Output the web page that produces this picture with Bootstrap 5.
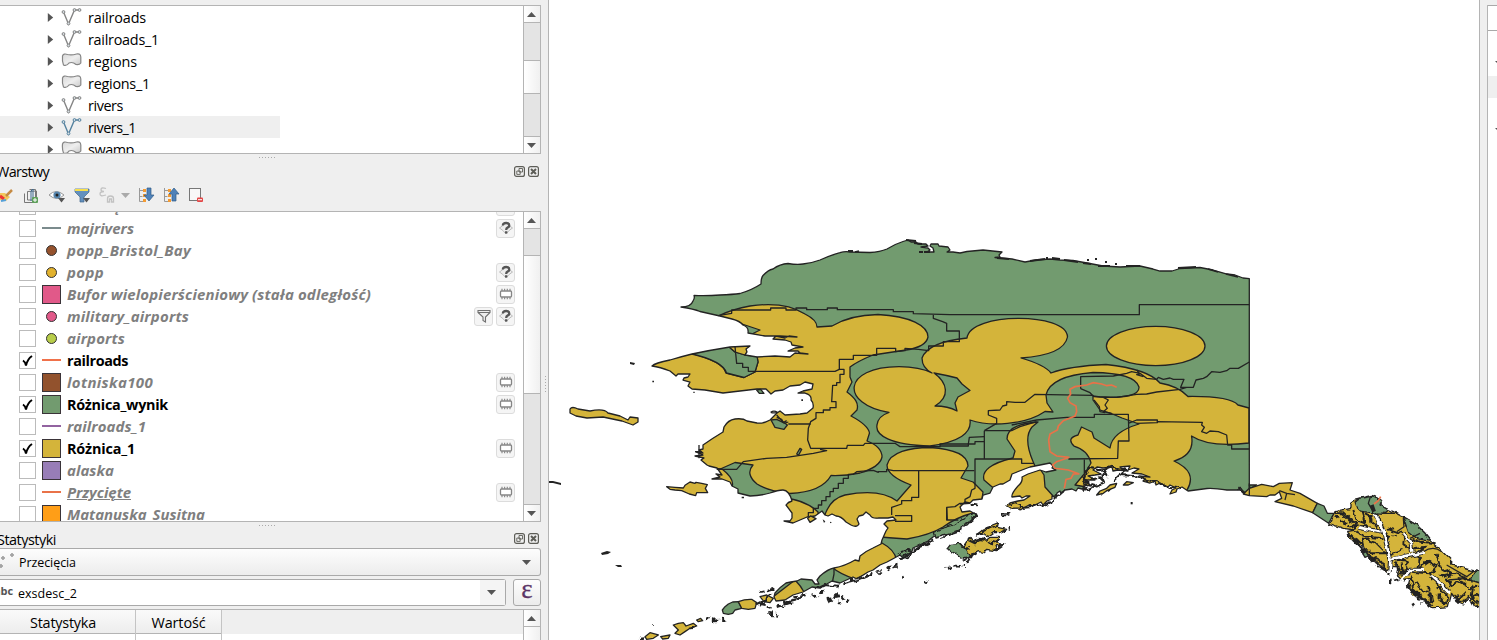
<!DOCTYPE html>
<html lang="pl">
<head>
<meta charset="utf-8">
<title>QGIS</title>
<link href="https://cdn.jsdelivr.net/npm/bootstrap@5.3.0/dist/css/bootstrap.min.css" rel="stylesheet">
<style>
body{width:1497px;height:640px;overflow:hidden;background:#efefef;color:#000;font:14.4px/22px "Open Sans","Noto Sans",sans-serif}
svg{display:block;flex:none}
.dock{width:549px;border-right:1px solid #b4b4b4}
.dock>*{flex-shrink:0}
.pane{width:541px;border:1px solid #b4b4b4;border-left:0;background:#fff;overflow:hidden}
.tree{height:149px;margin-top:5px}
.layers{height:311px}
.trow{height:22px;width:280px;padding-left:46px}
.trow.sel{background:#efefef}
.trow svg+svg{margin-left:6px}
.t{white-space:pre;display:inline-block}
.trow .t{margin-left:6px;padding-top:1px}
.sbar{width:17px;border-left:1px solid #b4b4b4;background:#e4e4e4}
.sbtn{height:17px;padding-right:1px;background:linear-gradient(90deg,#fff,#f0f0f0);display:flex;align-items:center;justify-content:center}
.thumb{border:solid #b4b4b4;border-width:1px 0;background:linear-gradient(90deg,#fff,#f0f0f0)}
.bt{border-top:1px solid #b4b4b4}.bb{border-bottom:1px solid #b4b4b4}
.split{height:7px;padding-top:3px}
.grip{width:17px;height:1px;margin-left:259px;background:repeating-linear-gradient(90deg,#aaa 0 1px,transparent 1px 3px)}
.ttl{height:22px;width:541px;padding-right:2px}
.tools{height:28px}
.lrow{height:22px;padding:0 8px 0 19px;color:#7f7f7f;font-weight:700;font-style:italic;width:523px;font-size:15px}
.lrow.on{color:#000;font-style:normal;font-size:14.4px}
.chk{width:17px;height:17px;border:1px solid #bbb;background:#fff;flex:none}
.sym{width:20px;height:20px;margin:0 5px 0 5px;flex:none;display:flex;align-items:center;justify-content:center}
.lrow .t{margin-left:1px}
.lrow.on .t{padding-top:1px}
.sq{width:19px;height:19px;border:1px solid #3a3338}
.dot{width:11px;height:11px;border:1.3px solid #333;border-radius:50%;margin-left:1px}
.ln{width:19px;height:2px}
.ind{width:19px;height:19px;border:1px solid #dcdcdc;border-radius:3px;background:#f5f5f5;margin-left:3px;display:flex;align-items:center;justify-content:center}
.combo{height:28px;width:541px;border:1px solid #a9a9a9;border-left:0;border-radius:0 3px 3px 0;background:linear-gradient(#fdfdfd,#ececec);font-size:12.5px}
.field{height:27px;width:506px;border:1px solid #a9a9a9;border-left:0;border-radius:0 3px 3px 0;background:#fff;font-size:12.5px}
.eps{width:28px;height:27px;border:1px solid #a9a9a9;border-radius:3px;background:linear-gradient(#fdfdfd,#ececec);color:#5c3566;font:27px/19px "Liberation Serif",serif;-webkit-text-stroke:.3px #5c3566;text-align:center}
.abc{font:bold 11px/20px "Open Sans",sans-serif;color:#555;margin-left:-6px;margin-right:5px}
.th1{height:24px;border-bottom:1px solid #b4b4b4;background:linear-gradient(#fafafa,#ededed);text-align:center}
.map{width:931px;background:#fff;border-right:1px solid #b4b4b4;overflow:hidden}
.vgrip{position:absolute;left:545px;top:376px;width:1px;height:17px;background:repeating-linear-gradient(#aaa 0 1px,transparent 1px 3px)}
.rp{width:10px;margin-left:7px;background:#fff;border-left:1px solid #b4b4b4;margin-top:5px}
.k{fill:none;stroke:#232323;stroke-width:1.3;stroke-linejoin:round}
.c{stroke:#232323;stroke-width:1.3;stroke-linejoin:round;vector-effect:non-scaling-stroke}
.n{fill:none}.y{fill:#d4b43a}.g{fill:#729b6f}.w{fill:#fff}
.r1{fill:none;stroke:#232323;stroke-width:6;stroke-linejoin:bevel;filter:url(#rough)}
.isl{fill:none;stroke:#232323;stroke-width:8;stroke-dasharray:14 7 22 6 9 8;stroke-linejoin:bevel;filter:url(#rough)}
</style>
</head>
<body class="d-flex position-relative">
<svg width="0" height="0" class="position-absolute">
<defs>
<filter id="rough" filterUnits="userSpaceOnUse" x="-20" y="-20" width="1300" height="480"><feTurbulence type="fractalNoise" baseFrequency=".05" numOctaves="2" seed="4"/><feDisplacementMap in="SourceGraphic" scale="22" xChannelSelector="R" yChannelSelector="G"/></filter>
<filter id="rough2" filterUnits="userSpaceOnUse" x="-20" y="-20" width="1300" height="480"><feTurbulence type="fractalNoise" baseFrequency=".05" numOctaves="2" seed="9"/><feDisplacementMap in="SourceGraphic" scale="16" xChannelSelector="R" yChannelSelector="G"/></filter>
<symbol id="ex" viewBox="0 0 10 12"><path d="M2 1v10l6-5z" fill="#555"/></symbol>
<symbol id="vl" viewBox="0 0 20 18"><path d="M2 4l5 12L13 2h5" fill="none" stroke="currentColor" stroke-width="1.400"/><g fill="#d8e0e4" stroke="currentColor"><circle cx="2" cy="4" r="1.400"/><circle cx="7" cy="15.500" r="1.400"/><circle cx="13" cy="2" r="1.400"/><circle cx="18" cy="2" r="1.400"/></g></symbol>
<linearGradient id="gg" x2="1" y2="1"><stop stop-color="#d8d8d8"/><stop offset=".5" stop-color="#eee"/><stop offset="1" stop-color="#c8c8c8"/></linearGradient>
<symbol id="pg" viewBox="0 0 20 18"><path d="M1 4Q2 1 6 2.500Q10 3.500 15 2Q19 1 19.300 5V11Q18 13 14.500 12.500Q11 9.500 7.500 11Q5 14.500 2 13Q.5 9 1 4z" fill="url(#gg)" stroke="#858585" stroke-width="1.200"/></symbol>
<symbol id="up" viewBox="0 0 9 5"><path d="M0 5L4.500 0 9 5z" fill="#555"/></symbol>
<symbol id="dn" viewBox="0 0 9 5"><path d="M0 0h9L4.500 5z" fill="#555"/></symbol>
<symbol id="fl" viewBox="0 0 11 11"><rect x=".6" y=".6" width="9.800" height="9.800" rx="2" fill="none" stroke="#5d5d57" stroke-width="1.200"/><path d="M5 2.500h3.500V6H5zM2.800 5h3.400v3.400H2.800z" fill="#efefef" stroke="#5d5d57" stroke-width=".9"/></symbol>
<symbol id="cl" viewBox="0 0 11 11"><rect x=".6" y=".6" width="9.800" height="9.800" rx="2" fill="none" stroke="#5d5d57" stroke-width="1.200"/><path d="M3 3l5 5M8 3L3 8" stroke="#5d5d57" stroke-width="2"/></symbol>
<symbol id="ck" viewBox="0 0 15 15"><path d="M3 7.500Q5.500 9 6 12.500Q7.500 6 12 3" fill="none" stroke="#000" stroke-width="2"/></symbol>
<symbol id="mem" viewBox="0 0 14 14"><rect x="1.500" y="4" width="11" height="6" rx="1" fill="#fff" stroke="#858585" stroke-width="1.300"/><path d="M3 1.700V4m2.600-2.300V4m2.700-2.300V4M11 1.700V4M3 10v2.300M5.600 10v2.300M8.300 10v2.300M11 10v2.300" stroke="#8c8c8c" stroke-width="1.200"/></symbol>
<symbol id="q" viewBox="0 0 14 14"><path d="M.5 7Q4 5 7 1Q10 5 13.500 7Q10 9 7 13Q4 9 .5 7z" fill="#eee" stroke="#bbb"/><path d="M3.800 4.500Q4 2 7.200 2Q10.300 2 10.300 4.400Q10.300 5.800 8.500 6.600Q7.200 7.200 7.200 9M7.200 10.300v2.300" fill="none" stroke="#555" stroke-width="2.300"/></symbol>
<symbol id="fn" viewBox="0 0 14 14"><path d="M1 1.500h12v2L8.500 8v5L6 11.500V8L1 3.500zM1 3.500h12" fill="#eee" stroke="#707070" stroke-width="1.100"/></symbol>
</defs></svg>

<div class="dock d-flex flex-column flex-shrink-0">
 <div class="pane tree d-flex justify-content-between">
  <div id="tree"></div>
  <div class="sbar d-flex flex-column flex-shrink-0"><div class="sbtn bb"><svg width="9" height="5"><use href="#up"/></svg></div><div style="height:37px"></div><div class="thumb" style="height:34px"></div><div class="flex-grow-1"></div><div class="sbtn bt"><svg width="9" height="5"><use href="#dn"/></svg></div></div>
 </div>
 <div class="split"><div class="grip"></div></div>
 <div class="ttl d-flex align-items-center justify-content-between"><span class="t" data-w="53" style="margin-left:-4px">Warstwy</span><span class="d-flex" style="gap:3px;margin-top:-2px"><svg width="11" height="11"><use href="#fl"/></svg><svg width="11" height="11"><use href="#cl"/></svg></span></div>
 <div class="tools"><svg width="210" height="26" viewBox="0 183 210 26">
  <path d="M0 193l5 0 5 4-4 4-6-1z" fill="#f2c85c"/><path d="M0 196l4 3" stroke="#e33" stroke-width="3"/><path d="M1 201l5-1" stroke="#54a0d8" stroke-width="2"/><path d="M6 196l6-6" stroke="#c58a43" stroke-width="2.500"/>
  <g fill="none" stroke="#777"><path d="M24.500 193.500v9h9M27.500 191.500v8.500h9v-9zM29.500 189.500h6v8"/></g><path d="M31 201v-10l2-2v9" fill="none" stroke="#3d6b92"/><rect x="32" y="197" width="6" height="6" rx="1" fill="#5fa05c"/><path d="M35 198v4m-2-2h4" stroke="#fff"/>
  <path d="M49 195q7-7 15 0q-7 7-15 0z" fill="#fff" stroke="#999"/><circle cx="57" cy="195" r="3.600" fill="#5685ad"/><circle cx="57" cy="195" r="1.500" fill="#222"/><path d="M58 198h7l-3.500 4.500z" fill="#555"/>
  <path d="M75 189h14v3l-5 5v5h-4v-5l-5-5z" fill="#6390bd" stroke="#44688c" stroke-width=".7"/><path d="M75 189h13v2H75z" fill="#f7df4e"/><path d="M83 198h7l-3.500 4.500z" fill="#555"/>
  <path d="M106 188.500q-5-1.500-5 1q0 2 3 2q-4 0-4 2.500q0 3 6 1M107.500 202v-3.500q0-2.500 3-2.500t3 2.500v3.500h-2v-3h-2v3z" fill="none" stroke="#c2c2c2" stroke-width="1.300"/><path d="M121 193h9l-4.500 5z" fill="#aaa"/>
  <path d="M139.500 188v13.500h5M139.500 190.500h5M139.500 196.500h3" fill="none" stroke="#999"/><path d="M143 189h3v3h-3zm0 5h3v3h-3zm0 5h3v3h-3z" fill="#f49b32"/><path d="M147 188h4v7h3l-5 6-5-6h3z" fill="#4f82b9" stroke="#315b87" stroke-width=".7"/>
  <path d="M164.500 188v13.500h5M164.500 190.500h5M164.500 196.500h3" fill="none" stroke="#999"/><path d="M168 189h3v3h-3zm0 5h3v3h-3zm0 5h3v3h-3z" fill="#f49b32"/><path d="M172 201h4v-7h3l-5-6-5 6h3z" fill="#4f82b9" stroke="#315b87" stroke-width=".7"/>
  <rect x="189.500" y="188.500" width="11" height="12" fill="#f8f8f8" stroke="#777"/><rect x="197" y="197.500" width="6" height="4.500" rx="1" fill="#e34646"/><path d="M198 199.700h4" stroke="#fff"/>
 </svg></div>
 <div class="pane layers d-flex justify-content-between">
  <div id="layers" style="margin-top:-17px"></div>
  <div class="sbar d-flex flex-column flex-shrink-0"><div class="sbtn bb"><svg width="9" height="5"><use href="#up"/></svg></div><div style="height:26px"></div><div class="thumb" style="height:139px"></div><div class="flex-grow-1"></div><div class="sbtn bt"><svg width="9" height="5"><use href="#dn"/></svg></div></div>
 </div>
 <div class="split"><div class="grip"></div></div>
 <div class="ttl d-flex align-items-center justify-content-between" style="height:19px"><span class="t" data-w="59" style="margin-left:-3px;padding-top:2px">Statystyki</span><span class="d-flex" style="gap:3px"><svg width="11" height="11"><use href="#fl"/></svg><svg width="11" height="11"><use href="#cl"/></svg></span></div>
 <div class="combo d-flex align-items-center justify-content-between"><span class="d-flex align-items-center"><svg width="19" height="20"><g fill="#ccc" stroke="#888"><circle cx="1" cy="14" r="1.300"/><circle cx="3" cy="6" r="1.300"/><circle cx="12" cy="3" r="1.300"/></g></svg><span class="t" data-w="57" style="padding-top:2px">Przecięcia</span></span><svg width="9" height="5" style="margin-right:9px"><use href="#dn"/></svg></div>
 <div class="d-flex" style="gap:7px;margin-top:3px"><div class="field d-flex align-items-center justify-content-between"><span class="d-flex"><span class="abc t" data-w="19">abc</span><span class="t" data-w="59" style="padding-top:2px">exsdesc_2</span></span><span class="d-flex align-items-center justify-content-center" style="width:25px;height:25px;background:#f4f4f4;padding-right:3px"><svg width="9" height="5"><use href="#dn"/></svg></span></div><div class="eps">ε</div></div>
 <div class="pane d-flex justify-content-between" style="height:31px;margin-top:3px;border-bottom:0;background:linear-gradient(#efefef 24px,#fff 24px)"><div class="d-flex"><div style="width:136px;border-right:1px solid #c4c4c4"><div class="th1"><span class="t" data-w="66" style="margin-left:-9px;padding-top:2px">Statystyka</span></div></div><div style="width:86px;border-right:1px solid #c4c4c4"><div class="th1"><span class="t" data-w="54" style="padding-top:2px">Wartość</span></div></div></div>
  <div class="sbar"><div class="sbtn bb"><svg width="9" height="5"><use href="#up"/></svg></div><div class="thumb border-0" style="height:20px"></div></div></div>
</div>
<div class="vgrip"></div>

<div class="map flex-shrink-0">
<svg width="930" height="640" viewBox="549 0 930 640">
<defs><path id="land" d="M681 307Q691 307 693 301Q695 298 694 295.500Q708 296 720 295 733 294.500 740 293.500 752 290 761 284 761 278 763 275.500 768 270 773 269 780 264 788 263.500 797 265 803 264Q812 263 820 260 831 255 840 252.700 Q845 251 850 252L870 252.500Q880 252 887 249 895 244 903 241.500L908 240 911 242 916 242 918 244 926 244 928 246 921 247 928 248 930 250 927 252 934 252 933 248 930 246 931 244 938 244 939 246 948 247 950 250 947 252 953 252 960 253 967 251.500 983 250 1002 252 999 255 1000 257 995 257.500 1012 259 1025 262 1036 260 1050 259 1060 260 1073 260.500 1087 263 1103 266 1120 267 1140 266 1153 269 1160 271 1172 271 1180 268.500 1200 267.500 1213 270 1227 274 1235 275 1243 278 1249.300 278.700V495L1241 490 1227 490Q1214 488 1207 488.500L1188 491 1182 487 1177 489 1176 492 1170 494 1172 490 1176 488 1170 485 1168 487 1160 483 1156 485 1155 481 1150 483 1143 481 1145 479 1139 476 1150 477 1142 474 1132 473 1139 469 1134 468 1128 470 1130 466 1120 467 1122 469 1128 471 1118 470 1113 471 1112 467 1103 468 1097 467 1093 470 1101 474 1095 475 1088 476 1092 478 1095 480 1085 480 1091 486 1086 485 1082 489 1078 488 1076 491 1072 489 1065 490 1061 494 1060 491 1057 493 1056 498 1052 496 1052 499 1047 501 1043 505 1041 502 1033 506 1029 505 1020 510 1019 507 1008 505 1010 503 1018 501 1024 500 1030 496 1026 496 1022 498 1020 496 1012 497Q1011 494 1018 486 1023 482 1022 477L1028 474 1040 470 1046 472 1056 470 1052 468 1053 466 1050 463 1030 467 1022 470 1012 474 1010 480 1003 484 1000 484 993 487 990 493 983 495 982 499 973 500 970 503 965 502 960 507 962 512 970 511 977 515 973 519 967 525 960 526 958 531 953 532 946 531 933 537 928 541 913 548 911 554 903 558 900 555 887 562 880 565 873 570 868 572 857 579 853 577 840 583 832 581 820 588 812 587 803 592 793 595 785 600 776 601 774 597 775 593Q780 587 786 583 790 582 797 581L801 579 812 580 815 584 819 584 817 580 820 576Q828 569 834 568 845 566 855 560L859 561 860 556Q866 551 873 548L881 544 882 540 886 531 888 528 884 524 887 521 896 520 893 517 888 518 879 518Q872 519 870 515L866 512 863 515 859 516 857 519 859 524Q857 528 851 525L846 522Q841 516 836 516L832 514 828 516 825 515 822 511 815 516 807 517 793 523 784 521 790 521 792 518 792 513 786 505Q788 502 792 501 789 490 783 490 778 490 770 493 760 496 750 496L738 493 738 489 732 486 730 482 722 479 712 479 720 477 716 474 722 475 717 468 709 466 707 465 701 460 704 458 695 456 703 455 696 452 703 453 699 450 703 449 703 445Q713 438 723 432L724 427Q728 420 735 419 743 418 747 421L757 423Q763 424 770 420L777 413 780 411 785 415 800 414 807 413 813 408Q814 403 811 400 812 395 805 393L798 393 803 391 812 389 813 384 805 382 800 385 790 386 783 390 775 391 771 394 766 389 757 389 740 391 723 393 705 390 692 389 688 386 690 382 683 380 684 378 688 377 690 374 678 374 676 376 670 371Q660 367 652 366 655 363 670 360 680 357 692 354 711 350 730 347L750 346 746 349 747 352 745 355Q751 356 757 357L775 356 790 357 795 353 808 354 800 353 798 351 788 351 795 348 803 347 792 345 791 342 785 340 773 339 776 336 785 338 789 336 797 337 780 336 765 336 748 333Q749 327 743 325 740 321 732 319L720 316 700 311.500Q694 309 681 307z"/>
<clipPath id="lc"><use href="#land"/></clipPath></defs>
<use href="#land" class="g"/>
<g clip-path="url(#lc)">
 <path class="k y" d="M718 316Q733 309 750 306Q785 301 805 314Q817 320 817 327L832 326Q850 315 878 314.500C910 316 928 326 928 337Q926 347 906 350Q880 354 873 355Q858 361 850 367L850 377 852 382 847 392C855 398 859 403 857 410L851 416Q868 425 869.500 433L867 441C880 446 882 452 882 457Q880 467 860 473Q845 476 831 475.500Q822 492 790 493.500Q768 491 757 484Q745 474 753 465L735 462.500 718 470 640 460 640 350 690 353Q723 361 726 373L744 377.500 755 372 758 362 757 356 735 352 728 346 760 330z"/>
 <path class="k g" d="M690 353.500Q723 361 726.500 373L744 377.500 755 372 758 362 757 356 745 355 735 352 728 346z"/>
 <path class="k y" d="M728 346L751 345 745 355 735 352zM700 468L722 469Q735 479 732 487L725 492 700 484zM780 497Q806 500 818 512L820 530 770 530z"/>
 <path class="k y" d="M824 518Q829 499 845 495Q880 488 897 501L911 485Q887 476 887 465C890 452 910 447.500 930 447.500Q968 450 968 466L961 478 973 482 983 492 980 512 973 513Q957 517 943 527 930 535 907 539 890 538 870 536 830 540z"/>
 <path class="k y" d="M922 358Q928 342 967 338C970 312 1067 312 1067.500 337Q1064 355 1021 358Q1045 365 1051 373Q1070 366 1106 364.500Q1148 369 1160 383Q1178 386 1188 396.500Q1230 396 1238 405L1249 408V443Q1210 448 1191.500 436Q1195 455 1174 461Q1198 472 1187 490L1160 500 1075 485 1085 473 1091 463Q1088 450 1074 446 1066 438 1078 435L1081.500 427 1092 432 1094 438 1110 448Q1112 432 1139 424L1122 418 1110 413 1100 410 1093 400 1093 396 1100 397Q1140 399 1139 387Q1135 373 1093 372.500Q1050 376 1046 395L1047 403 1053 412 1045 411.500C1025 425 990 427 970 420Q973 440 930 446C890 445 875 435 877 425Q878 416 889 412.500C840 404 842 367 899 366.700Q920 367 932 373Q922 368 922 358z"/>
 <path class="k g" d="M934 373Q945 375 957 378L962 384 970 390.500 958 397 955 403 957 411Q948 406 935 406C950 397 948 383 934 373z"/>
 <ellipse class="k y" cx="1155.700" cy="346" rx="49.300" ry="19.700"/>
 <path class="k y" d="M1038 422Q1007 424 1007 439L1015 451 1013 458Q980 466 984 480L998 492 1035 466 1033 461.500Q1023 438 1032 427zM1016 476L1040 469 1044 475 1045 487 1054 497 1050 515 1000 510z"/>
 <path class="k y" d="M882 543Q895 550 896.500 560L855 579Q840 574 833 568L850 555zM795 580Q801 586 804 592L790 605 765 603z"/>
 <path class="k n" d="M834 568V574L832 584"/>
</g>
<use href="#land" class="k"/>
<g transform="translate(640 230) scale(.33333)" class="n">
 <path class="c" d="M235 257L275 250V240H392V234H438V240H468V234H500V239H562V234H592V239H760V245H820V251L930 254H1498V224H1828"/>
 <path class="c" d="M880 255V265L908 275 920 280V303H958V335H910V348H866V362L835 358 795 355V362L767 365V355H710V376H640V388H598V418H612V433H600V458H590V466H578L575 515H588V533H570V540H550V548H528V565L512 575 505 595 503 630 512 655H620L622 646H670L675 640H765L780 650H900V642H985L988 622 1033 620"/>
 <path class="c" d="M285 350L290 400H308V412H325V424H585L598 418M445 582H512M410 555L432 580 445 576M230 718H290L310 695 380 685 440 682 520 670 560 662 540 658M1003 722H760L740 718V725H715V727L700 721 650 725 640 733H625V745H610V760H595V775H580V785H570V800H558V812H545V825H535V835H520V848H505V858M836 723V802H815V812H785V822L755 832V855M765 857H815V874H765M920 834V870H955M990 820L960 822"/>
 <path class="c g" d="M393 570L410 568 435 580 442 585 432 598 405 592zM470 672L480 655 485 658 476 675zM350 480L362 478 372 490 358 490z"/>
 <path class="c" d="M410 562L425 568 430 578 440 572"/>
 <path class="c y" d="M80 770L105 772 130 774 135 766 150 756 165 760 168 757 185 760 202 764 196 775 203 788 170 788 167 797 148 792 125 782 105 780 90 778z"/>
 <path class="c y" d="M503 865L512 858 528 866 510 877z"/>
 <path class="c n" d="M392 547Q402 540 412 547Q402 550 392 547M165 665H185M177 645V685"/>
 <path d="M37 452h5v5h-5zM160 485h4v4h-4zM484 508h5v5h-5zM305 800h7v5h-7zM548 868l8 6-4 5zM570 875l6 2-6 3z" fill="#232323"/>
</g>
<g transform="translate(940 370) scale(.33333)" class="n">
 <path class="c" d="M133 182H215L240 170 290 155M133 182V265M282 280H245V267H105V355L95 360 90 380 75 388V400H60L45 410 20 412 22 450M460 76L285 73 255 97 225 97 200 95V105L188 108 180 120 145 122V135L170 145V160L133 182M0 228H85V222H105V215H133M215 165L290 150 380 142H463V133H565L567 213H535L533 265 385 267M433 267V310M422 56V20L520 18 560 10 575 5 600 10 620 25 650 28 655 22 670 28 690 24 700 28H732L722 52H760L768 30 790 25 800 20 815 5 840 7 860 2 870 -5 895-5 928-24M422 56L450 68 462 80 530 82 590 73 620 72 650 66 720 58 740 52M590 0L600 12 590 14 610 20M490 82L505 90 495 105 502 115 490 125 515 130M565 160L590 150H652V158L590 160M650 155L787 157 785 165 793 172 785 185 800 190 810 183 835 185 860 195 863 225H875V237H928M462 90L478 110 480 125 495 128"/>
 <path class="r1" d="M440 310L450 290 490 300 520 290 560 300 545 315 580 318 600 325 640 335 690 350 720 355M425 320L450 340 470 350 490 340 480 320 500 315 470 300M430 360L450 355 465 345 430 335M375 360L350 375 335 395 310 405 280 410 240 415 210 405M480 372L530 345M440 300L430 330 440 350M450 330L475 325M490 300L500 315M540 310L520 330M185 433H205M90 405H105M895 355L912 370"/>
 <path class="c y" d="M470 375L480 363 500 355 510 345 530 340 525 352 500 362 490 370zM550 345L560 335 580 338 565 345z"/>
 <path d="M572 396h6v7h-6z" fill="#232323"/>
 <path d="M530 52L515 45 500 47 485 42 460 38 440 45 405 50 390 58 392 72 383 85 390 98 408 108 410 125 405 138 370 152 355 168 352 180 330 192 326 210 330 245 350 258 388 262 350 275 338 285 345 295 385 300 418 312 400 312 393 325 378 328 373 355" stroke="#e97248" stroke-width="5"/>
</g>
<g fill="none" stroke="#232323" stroke-width="1.800"><path d="M906 240l10 1M914 243l8 1M919 252h4M924 252h6M997 258l12 1M1030 261l15-2M1052 258l8 1M1064 260l14 2M1083 263l8 1M1098 266l12 0M1126 266l14 0M1178 268l18-1M1208 269l10 3M1226 274l12 3M848 251l5 0M855 252l4-1M1087 260h2M1095 259h2M1105 262h2M1115 264h2M1046 258h2"/></g>
<!-- Aleutians and Kodiak -->
<g transform="translate(640 500) scale(.33333)">
 <path class="c g" d="M247 330L255 320 265 312 278 306 295 305 305 325 285 330 278 340 265 343 250 340z"/>
 <path class="c y" d="M295 305Q315 297 335 298L350 308 345 325 325 328 305 325zM100 375L115 370 130 368 138 378 160 370 170 378 150 385 135 395 120 405 105 400 115 390zM15 410L30 398 55 405 40 415 20 418zM62 410L90 405 85 415 68 417zM170 360L182 355 188 362 175 365zM360 290L380 285 400 295 390 308 372 305z"/>
 <g filter="url(#rough2)">
 <path class="c y" d="M975 133L990 112 1000 128 1015 118 1040 120 1050 112 1078 112 1068 125 1092 132 1065 138 1070 152 1040 148 1030 158 1020 155 985 165 970 150zM1012 102L1025 92 1050 78 1075 68 1072 82 1100 88 1078 98 1060 98 1042 110 1030 105zM1100 18L1125 8 1142 14 1140 27 1115 28z"/>
 <path class="c g" d="M920 148L932 133 965 130 978 150 992 170 962 174 945 160zM880 97L900 87 935 77 975 54 1000 40 1012 50 985 67 965 77 960 92 930 102 885 114z"/></g>
 <path class="r1" d="M880 120L850 135 820 150 810 168 785 178M700 215L685 225 650 240 610 250M595 260L555 255 525 268M490 285L470 297 440 305M415 310L430 325M350 315L380 300 395 280M780 175L830 148 870 130M900 115L960 95M990 65L1010 50M970 180L990 170 1010 158M1010 105L1045 85 1075 75M1055 155L1085 135M985 120L1005 130 1035 115M1040 125L1060 130 1080 115M960 130L985 150M780 160L810 150"/>
 <path class="isl" d="M560 295L610 290 625 308M565 305L590 285 600 315M518 288L535 283 555 275M385 340L412 343M195 355L225 360 255 357M150 385L172 376M920 205L950 198 975 200M785 225L792 235M855 245L865 248M740 205L770 195M715 215L720 220M410 320L455 305M460 290L500 285M360 315L395 322M40 373h5M360 275L400 265M1080 43H1105M995 12L1010 15M1085 90L1110 88M980 190L990 175M0 417L20 415"/>
</g>
<path class="k y" d="M570 409Q572 406 578 409L590 411Q604 408 608 413L620 416 628 420 630 417 638 418 638 422 633 425 622 421 603 417 587 418 576 416 570 413z"/>
<path d="M549 481h4l8 2v2l-8-2h-4zM630 362l5 1-1 2-4-1zM601 553l6-2 4 1-3 2-6 1zM615 565l6 0 1 2-4 0zM638 365l3 2" fill="#232323"/>
<!-- south-east panhandle -->
<g transform="translate(1240 470) scale(.33333)">
 <path class="c g" d="M28 45L50 45 30 55z"/>
 <path class="c y" d="M10 72L28 55 65 43 100 50 118 40 157 38 150 60 180 70 232 100 218 128 160 108 105 95 125 85 118 65 105 75 90 75 80 80 28 77z"/>
 <path class="c n" d="M28 40V77M118 62L140 70 135 90M140 70L165 74M0 52L15 70"/>
 <path class="c g" d="M232 100L252 108 262 130 282 130 266 160 218 128z"/>
 <g filter="url(#rough2)">
 <path class="c y" d="M266 160L285 125 330 115V98L345 88 395 76 425 92 422 108 460 125 492 143 530 165 555 190 575 215 605 240 635 270V285L690 300 728 308V410L700 408 685 380 670 402 648 393 635 370 625 410 600 412 578 413 545 385 520 375 505 345 510 325 485 330 470 315 475 290 450 290V315L425 295 395 265 370 235 330 205 320 185 345 180 310 175z"/>
 <path class="c g" d="M345 95L360 85 400 78 425 92 420 105 445 120 435 130 385 127 355 122zM490 143L530 165 555 190 575 215 530 205 505 185zM690 330L705 303 728 305V342z"/></g>
 <path class="c n" d="M392 78L385 100 400 125M425 130H465M490 143L492 170 470 185M510 205L540 190M550 245Q580 225 605 245M620 285L680 320 700 305M625 330L680 325"/>
 <path class="r1" d="M285 130L310 130 330 150 350 160 335 170M340 120L350 150 375 160 365 130M375 130L395 140 400 165 415 175M325 190L345 210 375 225 370 205 410 220 430 240M345 185L380 200 430 205M335 200L360 232 385 255M370 235L395 250 435 250M395 262L420 275 440 305 405 285M440 175L470 185 495 190 490 220 510 235M440 190L450 255 490 240M515 205L540 215 590 220M515 235L560 230 530 250M470 270L500 275 505 295 480 315 475 285M485 280L490 320M540 260L535 295 565 275 590 290 570 310M590 255L600 290 640 315M510 305L570 310 580 330M575 320L595 345 605 365M510 320L525 345 510 370M530 335L545 360 575 370 580 395 550 385M585 360L600 350 625 380 620 400 595 390M625 330L630 350 660 335 690 350M640 370L660 385 680 365M650 370L655 395 675 395M690 355L715 350M690 385L715 375M515 355L545 385 570 410M535 375L565 395 578 410M605 320L650 310 685 330M600 370L610 405M700 345L695 380 715 400"/>
 <path class="isl" d="M285 140L330 170 385 170M325 195L360 230 385 255 430 300M465 275L480 300M500 350L530 375 545 400M505 340L520 370 560 400M440 200L470 195M600 310L640 350M650 325L700 330M570 350L570 395M590 370L615 400M650 390L680 395M695 395L718 410M465 333L488 325M447 333h8M518 400l4 8"/>
 <path d="M355 172L425 187M405 125L432 190 450 270 552 247M452 262L448 305M490 190L512 215 517 245M490 318L508 300 550 300M575 318L600 340 625 365" fill="none" stroke="#232323" stroke-width="14" filter="url(#rough2)"/>
 <path d="M355 172L425 187M405 128L432 190 450 268 552 247M452 262L448 312M490 190L512 215 517 245M482 333L508 300 550 300M575 318L600 340 628 370" fill="none" stroke="#fff" stroke-width="8" filter="url(#rough2)"/>
 <path class="c g" d="M368 250L378 245 385 258 375 262z"/>
 <path d="M395 105L402 125" stroke="#232323" stroke-width="12"/>
 <path d="M402 102L415 92 422 80" fill="none" stroke="#e97248" stroke-width="5"/>
</g>
</svg>
</div>
<div class="rp flex-grow-1"><div style="height:26px;border:1px solid #a9a9a9;border-left:0;border-right:0"></div><div style="height:45px;padding:30px 0 0 7px"><svg width="4" height="4"><path d="M0 0h4v4z" fill="#555"/></svg></div><div style="height:22px;background:#efefef"></div><div style="padding:30px 0 0 7px"><svg width="4" height="4"><path d="M0 0h4v4z" fill="#555"/></svg></div></div>

<script>
// Browser tree: name, icon, text width
document.getElementById('tree').innerHTML=[['railroads','vl',58],['railroads_1','vl',71],['regions','pg',49],['regions_1','pg',62],['rivers','vl',35],['rivers_1','vl',48],['swamp','pg',46]]
.map(([n,i,w])=>`<div class="trow d-flex align-items-center ${n=='rivers_1'?'sel':''}"><svg width="9" height="11"><use href="#ex"/></svg><svg width="21" height="18" style="color:${n=='rivers_1'?'#55829f':'#858585'}"><use href="#${i}"/></svg><span class="t" data-w="${w}">${n}</span></div>`).join('');
// Layers: name, symbol, colour, text width, indicators, checked
document.getElementById('layers').innerHTML=[['Przecięcia','','',76,'q'],['majrivers','ln','#7b8b8d',67,'q'],['popp_Bristol_Bay','dot','#95522d',124,''],['popp','dot','#e2b22e',37,'q'],['Bufor wielopierścieniowy (stała odległość)','sq','#e15989',304,'mem'],['military_airports','dot','#e15989',122,'fn q'],['airports','dot','#b8cd4a',58,''],['railroads','ln','#f0714a',61,'',1],['lotniska100','sq','#92522d',86,'mem'],['Różnica_wynik','sq','#729b6f',101,'mem',1],['railroads_1','ln','#9263a0',79,''],['Różnica_1','sq','#d4b43a',68,'mem',1],['alaska','sq','#987db7',47,''],['Przycięte','ln','#e97248',64,'mem'],['Matanuska_Susitna','sq','#ff9e17',138,'']]
.map(([n,s,c,w,ind,on])=>`<div class="lrow d-flex align-items-center ${on?'on':''}"><span class="chk">${on?'<svg width="15" height="15"><use href="#ck"/></svg>':''}</span><span class="sym"><span class="${s}" style="background:${c}"></span></span><span class="t ${n=='Przycięte'?'text-decoration-underline':''}" data-w="${w}">${n}</span><span class="ms-auto d-flex">${ind.split(' ').filter(Boolean).map(k=>`<span class="ind"><svg width="14" height="14"><use href="#${k}"/></svg></span>`).join('')}</span></div>`).join('');
document.querySelectorAll('[data-w]').forEach(e=>{e.style.letterSpacing=(e.dataset.w-e.getBoundingClientRect().width)/e.textContent.length+'px'});
</script>
<script src="https://cdn.jsdelivr.net/npm/bootstrap@5.3.0/dist/js/bootstrap.bundle.min.js"></script>
</body>
</html>
